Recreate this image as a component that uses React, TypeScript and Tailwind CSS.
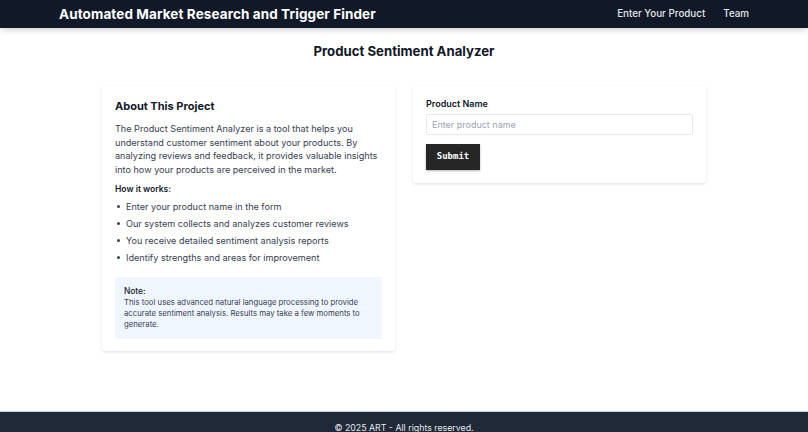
import { useState } from "react";

export default function App() {
  const [product, setProduct] = useState("");

  const steps = [
    "Enter your product name in the form",
    "Our system collects and analyzes customer reviews",
    "You receive detailed sentiment analysis reports",
    "Identify strengths and areas for improvement",
  ];

  return (
    <div className="min-h-screen flex flex-col bg-white text-[#1f2937]" style={{ fontFamily: '"Inter", "Liberation Sans", sans-serif' }}>
      <header className="bg-[#111827] h-[28px] shadow-[0_2px_6px_rgba(0,0,0,0.18)] relative z-10">
        <div className="w-[690px] mx-auto h-full flex items-center justify-between">
          <h1 className="text-white font-bold text-[13.5px] tracking-[0.1px]">Automated Market Research and Trigger Finder</h1>
          <nav className="flex gap-[18px] text-[9.8px] font-medium text-[#e5e7eb]">
            <a href="#">Enter Your Product</a>
            <a href="#">Team</a>
          </nav>
        </div>
      </header>

      <main className="flex-1 pt-[14px] pb-[60px]">
        <h2 className="text-center font-bold text-[13.2px] leading-[19px] text-[#111827] mb-[25px]">Product Sentiment Analyzer</h2>

        <div className="w-[604px] mx-auto grid grid-cols-2 gap-[18px] items-start">
          <section className="bg-white rounded-[3px] shadow-[0_1px_3px_rgba(0,0,0,0.12)] px-[13px] pt-[12px] pb-[12px]">
            <h3 className="font-bold text-[11px] leading-[16px] text-[#111827] mb-[8px]">About This Project</h3>
            <p className="text-[9.1px] leading-[13.5px] text-[#374151] -mr-[6px]">
              The Product Sentiment Analyzer is a tool that helps you understand customer sentiment about your products. By analyzing reviews and feedback, it provides valuable insights into how your products are perceived in the market.
            </p>
            <h4 className="mt-[7px] font-semibold text-[8.5px] leading-[13.5px] text-[#111827]">How it works:</h4>
            <ul className="mt-[3px] flex flex-col gap-[3.5px] text-[9.1px] leading-[13.5px] text-[#374151]">
              {steps.map((s) => (
                <li key={s} className="flex items-center gap-[6px]">
                  <span className="w-[3px] h-[3px] rounded-full bg-[#374151] ml-[2px]" />
                  {s}
                </li>
              ))}
            </ul>
            <div className="mt-[13px] bg-[#eff6ff] rounded-[3px] px-[9px] pt-[8px] pb-[9px]">
              <p className="font-medium text-[8.3px] leading-[12px] text-[#111827]">Note:</p>
              <p className="text-[7.75px] leading-[11px] text-[#374151]">
                This tool uses advanced natural language processing to provide accurate sentiment analysis. Results may take a few moments to generate.
              </p>
            </div>
          </section>

          <section className="bg-white rounded-[3px] shadow-[0_1px_3px_rgba(0,0,0,0.12)] px-[13px] pt-[11px] pb-[13px]">
            <label className="block font-semibold text-[9px] leading-[13px] text-[#111827] mb-[4px]">Product Name</label>
            <input
              value={product}
              onChange={(e) => setProduct(e.target.value)}
              placeholder="Enter product name"
              className="block w-full h-[21px] border border-[#e5e7eb] rounded-[2px] px-[5px] text-[9px] outline-none placeholder:text-[#9ca3af]"
            />
            <button
              className="block mt-[9px] w-[54px] h-[26px] bg-[#262626] text-white font-bold text-[9px] shadow-[0_1px_2px_rgba(0,0,0,0.3)]"
              style={{ fontFamily: '"DejaVu Sans Mono", "Liberation Mono", monospace' }}
            >
              Submit
            </button>
          </section>
        </div>
      </main>

      <footer className="bg-[#1f2937] border-t border-[#d1d5db] pt-[9px] pb-[11px] text-center text-[8.8px] leading-[13.5px] text-[#e5e7eb]">
        © 2025 ART - All rights reserved.
      </footer>
    </div>
  );
}
